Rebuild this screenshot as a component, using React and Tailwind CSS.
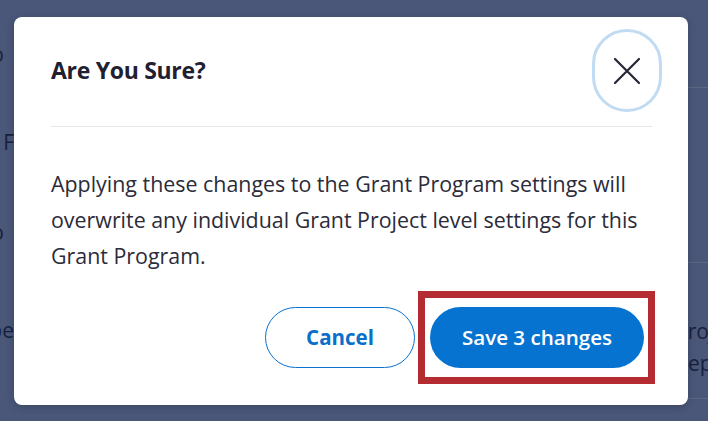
import React from "react";

function CloseIcon() {
  return (
    <svg width="28" height="28" viewBox="0 0 28 28" fill="none">
      <path d="M2 2 L26 26 M26 2 L2 26" stroke="#262637" strokeWidth="2.2" strokeLinecap="round" />
    </svg>
  );
}

export default function App() {
  return (
    <div
      className="relative h-[421px] w-[708px] overflow-hidden bg-[#4a5779]"
      style={{ fontFamily: "'Open Sans', 'Noto Sans', sans-serif" }}
    >
      {/* background page seen through overlay */}
      <div className="flex h-full w-full text-[21px] text-[#18213c]">
        <div className="flex w-[14px] flex-col overflow-hidden">
          <div className="mt-[42px] flex justify-end whitespace-nowrap pr-[10px] leading-[24px]">Info</div>
          <div className="mt-[64px] flex justify-end whitespace-nowrap leading-[24px]">Grant F</div>
          <div className="mt-[66px] flex justify-end whitespace-nowrap pr-[10px] leading-[24px]">Info</div>
          <div className="mt-[74px] flex justify-end whitespace-nowrap leading-[24px]">Type</div>
        </div>
        <div className="flex-1" />
        <div className="flex w-[40px] flex-col overflow-hidden">
          <div className="h-[88px] border-b border-[#5b6884]" />
          <div className="h-[175px] border-b border-[#5b6884]" />
          <div className="mt-[52px] ml-[7px] whitespace-nowrap leading-[32px]">Projects</div>
          <div className="ml-[7px] whitespace-nowrap leading-[32px]">Reports</div>
          <div className="h-[20px] border-b border-[#5b6884]" />
        </div>
      </div>

      {/* modal */}
      <div className="absolute left-[14px] top-[17px] flex h-[388px] w-[674px] flex-col rounded-[8px] bg-white pl-[37px] pr-[36px] shadow-[0_2px_8px_rgba(0,0,0,0.2)]">
        <div className="mt-[12px] flex items-center justify-between">
          <h2 className="text-[23px] font-bold tracking-[-0.3px] text-[#1f2030]">Are You Sure?</h2>
          <button className="mr-[-10px] flex h-[83px] w-[70px] items-center justify-center rounded-full border-[3px] border-[#c0dbf2] bg-white">
            <CloseIcon />
          </button>
        </div>
        <div className="mt-[14px] h-px bg-[#e6e6ec]" />
        <p className="mt-[39px] whitespace-nowrap text-[21.4px] leading-[36px] text-[#2b2b3a]">
          Applying these changes to the Grant Program settings will
          <br />
          overwrite any individual Grant Project level settings for this
          <br />
          Grant Program.
        </p>
        <div className="mt-[33px] flex justify-end gap-[15px] pr-[8px]">
          <button className="flex h-[61px] w-[150px] items-center justify-center rounded-full border border-[#0a72d0] bg-white text-[20.5px] font-bold text-[#0a6fc9]">
            Cancel
          </button>
          <div className="relative">
            <button className="flex h-[61px] w-[214px] items-center justify-center rounded-full bg-[#0673d1] text-[20.6px] font-semibold text-white">
              Save 3 changes
            </button>
            <div className="pointer-events-none absolute -bottom-[16px] -left-[12px] -right-[11px] -top-[16px] border-[7px] border-[#b52b32]" />
          </div>
        </div>
      </div>
    </div>
  );
}
